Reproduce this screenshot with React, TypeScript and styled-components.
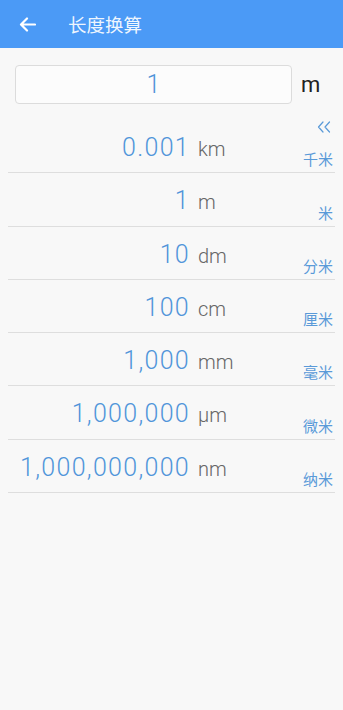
import React from 'react';
import styled, { createGlobalStyle } from 'styled-components';

const GlobalStyle = createGlobalStyle`
  html, body {
    margin: 0;
    padding: 0;
    background: #f8f8f8;
    font-family: Roboto, "Noto Sans CJK SC", sans-serif;
  }
`;

const Page = styled.div`
  width: 343px;
  min-height: 710px;
  background: #f8f8f8;
`;

const TopBar = styled.div`
  height: 48px;
  background: #4b9af6;
  display: flex;
  align-items: center;
  padding-left: 19px;
  box-sizing: border-box;
`;

const BackButton = styled.div`
  width: 17px;
  height: 17px;
  display: flex;
  align-items: center;
  justify-content: center;
  margin-right: 32px;
`;

const Title = styled.h1`
  margin: 0;
  font-size: 18.5px;
  font-weight: 400;
  color: rgba(255, 255, 255, 0.93);
  font-family: "Noto Sans CJK SC", sans-serif;
`;

const InputRow = styled.div`
  display: flex;
  align-items: center;
  padding: 17px 0 0 15px;
  height: 39px;
`;

const InputBox = styled.div`
  width: 277px;
  height: 39px;
  box-sizing: border-box;
  border: 1px solid #dcdcdc;
  border-radius: 4px;
  background: #fcfcfc;
  display: flex;
  align-items: center;
  justify-content: center;
  font-size: 25px;
  font-weight: 300;
  color: #4f93d8;
`;

const InputUnit = styled.span`
  margin-left: 9px;
  font-size: 22px;
  color: #222;
  font-family: Roboto, sans-serif;
`;

const List = styled.div`
  margin: 16px 8px 0 8px;
`;

const Row = styled.div`
  height: 53.3px;
  padding-top: 4px;
  box-sizing: border-box;
  border-bottom: 1px solid #dedede;
  display: flex;
  align-items: baseline;
  position: relative;
`;

const Value = styled.span`
  width: 182px;
  text-align: right;
  font-size: 25px;
  font-weight: 300;
  letter-spacing: 1.3px;
  color: #5095da;
  line-height: 48px;
  white-space: nowrap;
`;

const Unit = styled.span`
  margin-left: 8px;
  font-size: 20px;
  font-weight: 300;
  color: #666;
  flex: 1;
`;

const Side = styled.div`
  align-self: stretch;
  display: flex;
  flex-direction: column;
  align-items: flex-end;
  justify-content: flex-end;
  padding: 0 2px 5px 0;
`;

const Label = styled.span`
  font-size: 15px;
  color: #5a9ad8;
  font-family: "Noto Sans CJK SC", sans-serif;
  line-height: 17px;
`;

const Collapse = styled.div`
  position: absolute;
  top: 1px;
  right: 4px;
  display: flex;
`;

const ArrowLeft = () => (
  <svg width="17" height="15" viewBox="0 0 17 15" fill="none">
    <path d="M16 7.5H2.5M8 1.5L2 7.5l6 6" stroke="#fff" strokeWidth="2.2" strokeLinecap="round" strokeLinejoin="round" />
  </svg>
);

const DoubleChevron = () => (
  <svg width="14" height="12" viewBox="0 0 14 12" fill="none">
    <path d="M6 1L1.5 6 6 11M12.5 1L8 6l4.5 5" stroke="#5a9ad8" strokeWidth="1.2" strokeLinecap="round" strokeLinejoin="round" />
  </svg>
);

const units = [
  { value: '0.001', unit: 'km', label: '千米' },
  { value: '1', unit: 'm', label: '米' },
  { value: '10', unit: 'dm', label: '分米' },
  { value: '100', unit: 'cm', label: '厘米' },
  { value: '1,000', unit: 'mm', label: '毫米' },
  { value: '1,000,000', unit: 'µm', label: '微米' },
  { value: '1,000,000,000', unit: 'nm', label: '纳米' },
];

export default function App() {
  return (
    <Page>
      <GlobalStyle />
      <TopBar>
        <BackButton>
          <ArrowLeft />
        </BackButton>
        <Title>长度换算</Title>
      </TopBar>
      <InputRow>
        <InputBox>1</InputBox>
        <InputUnit>m</InputUnit>
      </InputRow>
      <List>
        {units.map((u, i) => (
          <Row key={u.unit}>
            <Value>{u.value}</Value>
            <Unit>{u.unit}</Unit>
            <Side>
              <Label>{u.label}</Label>
            </Side>
            {i === 0 && (
              <Collapse>
                <DoubleChevron />
              </Collapse>
            )}
          </Row>
        ))}
      </List>
    </Page>
  );
}
